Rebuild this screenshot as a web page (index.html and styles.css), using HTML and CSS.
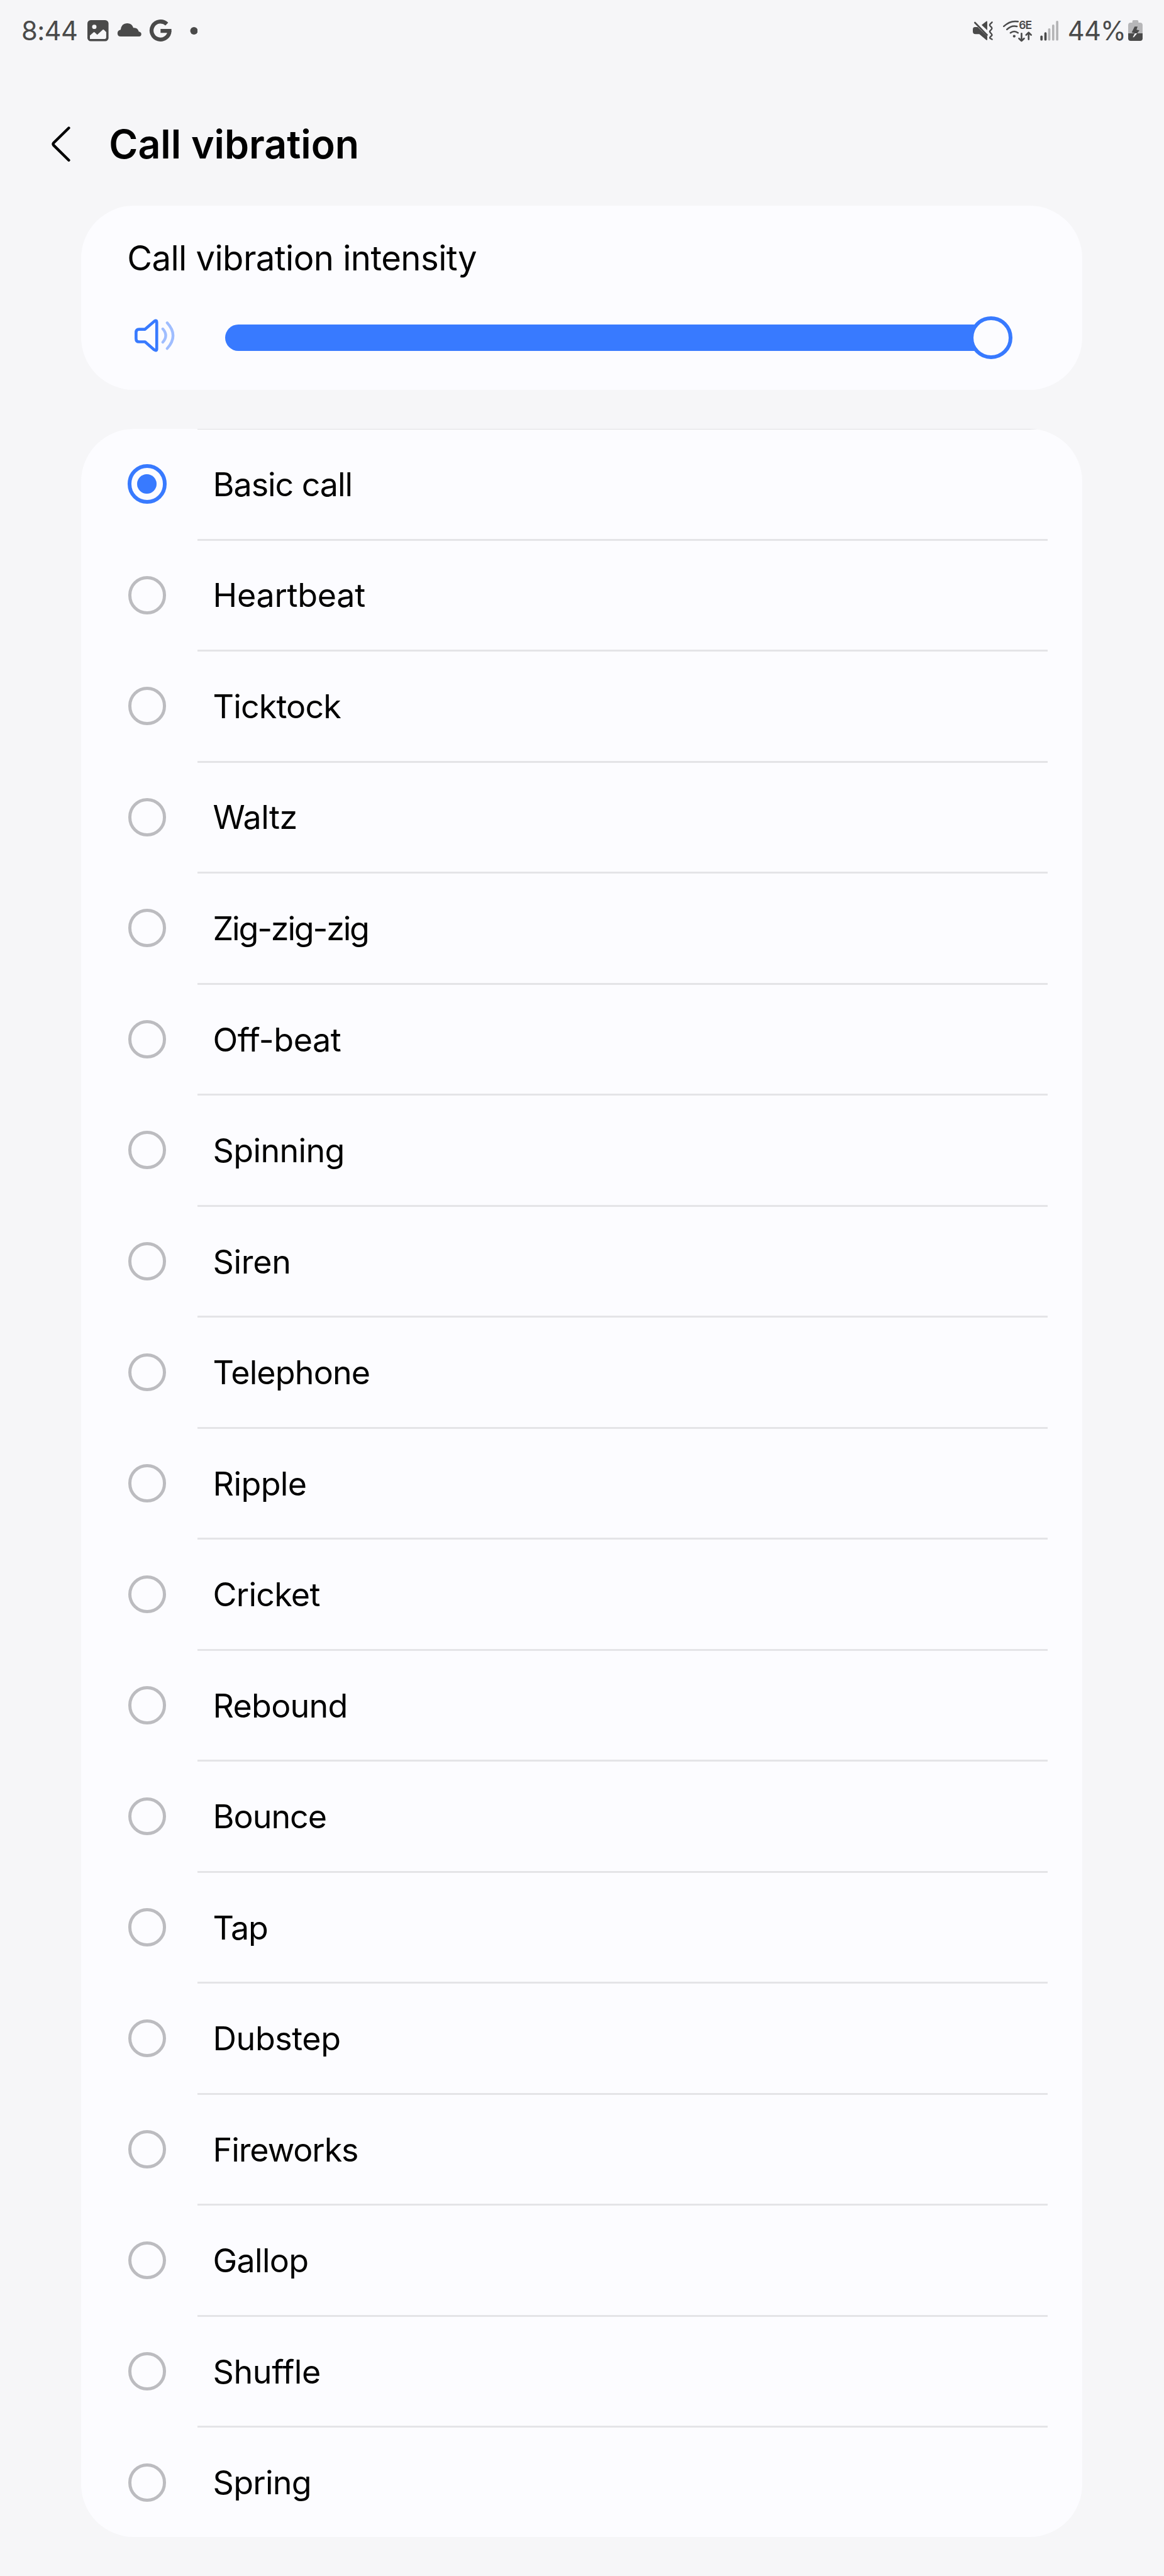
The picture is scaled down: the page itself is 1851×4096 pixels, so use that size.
FILE: index.html
```html
<!DOCTYPE html>
<html lang="en">
<head>
<meta charset="utf-8">
<title>Call vibration</title>
<link rel="stylesheet" href="styles.css">
</head>
<body>
<div class="status">
  <span class="time">8:44</span>
  <svg class="notifications" viewBox="417 87 529 120" fill="#4a4a4a">
    <rect x="417" y="96" width="101" height="101" rx="16"/>
    <circle cx="450" cy="128" r="10.5" fill="#f6f6f8"/>
    <path fill="#f6f6f8" d="M429 170L446 155Q449 152 452 155L464 166L488 144Q493 139 498 144L507 153V178Q507 186 499 186H429Z"/>
    <path d="M576 174Q561 174 561 159Q561 145 576 142Q580 111 607 111Q630 111 637 133Q657 130 663 151Q675 154 675 163Q675 174 664 174Z"/>
    <path fill="none" stroke="#4a4a4a" stroke-width="19" d="M797 115A43 43 0 1 0 810 147"/>
    <path d="M767 138H819V148L812 157H767Z"/>
    <circle cx="927" cy="147" r="18"/>
  </svg>
  <div class="system">
    <svg class="signals" viewBox="153 87 410 120" fill="#4a4a4a">
      <path d="M195 119L218 101Q222 100 222 104V144Z"/>
      <path d="M163 129H176L222 173V190Q221 194 217 191L184 163H166Q153 163 153 150V141Q153 129 163 129Z"/>
      <g fill="none" stroke="#4a4a4a" stroke-linecap="round" stroke-linejoin="round">
        <path stroke-width="8" d="M163 108L221 167"/>
        <path stroke-width="7" d="M245 106L235 116Q232 120 235 123L243 131Q246 135 243 139L236 147Q232 151 236 155L243 163Q246 167 243 170L236 177Q233 181 236 183L245 188"/>
        <path stroke-width="7.5" d="M301 126Q332 96 369 103M316 141Q338 119 364 126M333 157Q351 143 369 157"/>
        <path stroke-width="8" d="M386 160V194M374 184L386 195L398 184M420 188V156M408 167L420 155L432 167"/>
      </g>
      <circle cx="351" cy="173" r="6.5"/>
      <text class="band" x="373" y="139">6E</text>
      <rect x="476" y="170" width="11" height="24" rx="5"/>
      <rect x="495" y="154" width="11" height="40" rx="5"/>
      <g fill="#b4b4b6">
        <rect x="513" y="135" width="11" height="59" rx="5"/>
        <rect x="532" y="117" width="11" height="77" rx="5"/>
        <rect x="551" y="99" width="11" height="95" rx="5"/>
      </g>
    </svg>
    <span class="percent">44%</span>
    <svg class="battery" viewBox="897 87 69 120">
      <path fill="#b7b7b9" d="M897 160V120Q897 108 909 108H917V102Q917 96 923 96H940Q946 96 946 102V108H954Q966 108 966 120V160Z"/>
      <path fill="#4a4a4a" d="M897 159H966V184Q966 195 954 195H909Q897 195 897 184Z"/>
      <path fill="#4a4a4a" d="M928 127H942L937 142L951 145L940 159H929L914 155Z"/>
      <path fill="#f6f6f8" d="M929 159H940L924 178H919Z"/>
    </svg>
  </div>
</div>

<header class="header">
  <svg class="back" viewBox="0 0 30 56.4" fill="none" stroke="#000" stroke-width="4.4" stroke-linecap="round" stroke-linejoin="round"><path d="M27.5 2.5L3.2 26.4Q1.8 28.2 3.2 30L27.5 53.9"/></svg>
  <h1 class="title">Call vibration</h1>
</header>

<section class="card intensity">
  <h2 class="subtitle">Call vibration intensity</h2>
  <div class="slider">
    <svg class="speaker" viewBox="280 83 200 184" fill="none" stroke-linecap="round" stroke-linejoin="round">
      <path stroke="#387aff" stroke-width="14" d="M290 152Q290 136 304 136H333L377 98Q389 90 389 102V230Q389 242 377 234L333 196H304Q290 196 290 180Z"/>
      <path stroke="#9fbdff" stroke-width="13" d="M418 134Q446 166 418 198M439 105Q495 166 439 228"/>
    </svg>
    <div class="track"><div class="thumb"></div></div>
  </div>
</section>

<section class="card">
  <div class="topline"></div>
  <ul class="list">
    <li class="row"><i class="radio on"></i><span class="label">Basic call</span></li>
    <li class="row"><i class="radio"></i><span class="label">Heartbeat</span></li>
    <li class="row"><i class="radio"></i><span class="label">Ticktock</span></li>
    <li class="row"><i class="radio"></i><span class="label">Waltz</span></li>
    <li class="row"><i class="radio"></i><span class="label">Zig-zig-zig</span></li>
    <li class="row"><i class="radio"></i><span class="label">Off-beat</span></li>
    <li class="row"><i class="radio"></i><span class="label">Spinning</span></li>
    <li class="row"><i class="radio"></i><span class="label">Siren</span></li>
    <li class="row"><i class="radio"></i><span class="label">Telephone</span></li>
    <li class="row"><i class="radio"></i><span class="label">Ripple</span></li>
    <li class="row"><i class="radio"></i><span class="label">Cricket</span></li>
    <li class="row"><i class="radio"></i><span class="label">Rebound</span></li>
    <li class="row"><i class="radio"></i><span class="label">Bounce</span></li>
    <li class="row"><i class="radio"></i><span class="label">Tap</span></li>
    <li class="row"><i class="radio"></i><span class="label">Dubstep</span></li>
    <li class="row"><i class="radio"></i><span class="label">Fireworks</span></li>
    <li class="row"><i class="radio"></i><span class="label">Gallop</span></li>
    <li class="row"><i class="radio"></i><span class="label">Shuffle</span></li>
    <li class="row"><i class="radio"></i><span class="label">Spring</span></li>
  </ul>
</section>
</body>
</html>
```
FILE: styles.css
```css
* { box-sizing: border-box; }

body {
  margin: 0;
  min-height: 4096px;
  background: #f6f6f8;
  color: #000;
  font-family: Inter, "Liberation Sans", sans-serif;
  overflow: hidden;
}

svg { display: block; flex: none; }

/* Status bar */
.status {
  display: flex;
  align-items: center;
  height: 97.8px;
  padding: 0 34.2px 0 34px;
  color: #4a4a4a;
  font-size: 41.7px;
  font-weight: 380;
  line-height: 50px;
}
.time { width: 104.7px; letter-spacing: -0.6px; }
.notifications { width: 175.8px; height: 39.9px; }
.system { display: flex; align-items: center; margin-left: auto; }
.signals { width: 136.3px; height: 39.9px; margin-right: 14.8px; }
.band { font-size: 53px; font-weight: 600; letter-spacing: -3px; }
.percent { width: 96px; letter-spacing: -0.8px; }
.battery { width: 23px; height: 39.9px; }

/* Page header */
.header {
  display: flex;
  align-items: center;
  height: 197px;
  margin-top: 32.3px;
  padding-left: 81.8px;
}
.back { width: 29.9px; height: 56.2px; }
.title {
  margin: 0 0 0 61.6px;
  font-size: 62.6px;
  font-weight: 600;
  letter-spacing: 0;
}

/* Cards */
.card {
  width: 1592.8px;
  margin-left: 128.6px;
  border-radius: 84px;
  background: #fcfcff;
  overflow: hidden;
}

.intensity { height: 293.2px; margin-bottom: 61.9px; padding: 52.8px 0 0 73.6px; }
.subtitle {
  margin: 0 0 37.1px;
  font-size: 54.5px;
  font-weight: 400;
  line-height: 60px;
  letter-spacing: -0.58px;
}
.slider { display: flex; align-items: center; height: 120px; padding-left: 10.7px; }
.speaker { width: 66.5px; height: 61.1px; margin-right: 78.7px; }
.track {
  position: relative;
  width: 1217.8px;
  height: 42.6px;
  border-radius: 21.3px 0 0 21.3px;
  background: #387aff;
}
.thumb {
  position: absolute;
  top: -12.9px;
  right: -34.2px;
  width: 68.4px;
  height: 68.4px;
  border: 6.2px solid #387aff;
  border-radius: 50%;
  background: #fcfcff;
}

/* Vibration patterns */
.topline { height: 1px; margin: 0 55px 0 185.5px; background: #e0e0e2; }
.list { margin: 0; padding: 0; list-style: none; }
.row {
  display: flex;
  align-items: center;
  height: 176.52px;
  padding: 0 55px 0 74.4px;
}
.radio {
  display: flex;
  flex: none;
  width: 60.7px;
  height: 60.7px;
  margin: 0 49.8px 3.4px 0.6px;
  border: 5px solid #bcbcc0;
  border-radius: 50%;
}
.radio.on {
  width: 62.2px;
  height: 62.2px;
  margin: 0 49px 3.8px -0.1px;
  border: 6px solid #387aff;
}
.radio.on::before {
  content: "";
  width: 31px;
  height: 31px;
  margin: auto;
  border-radius: 50%;
  background: #387aff;
}
.label {
  display: flex;
  align-items: center;
  flex: 1;
  height: 100%;
  padding: 1px 0 0 24.5px;
  border-bottom: 3px solid #e4e4e7;
  font-size: 52px;
  letter-spacing: -0.75px;
}
.row:last-child { height: 173.5px; }
.row:last-child .label { border-bottom: 0; }
.row:last-child .radio { margin-bottom: 0; }

/* Per-name tracking */
.row:nth-child(1) .label { letter-spacing: -1.08px; }
.row:nth-child(2) .label { letter-spacing: -0.28px; }
.row:nth-child(3) .label { letter-spacing: -0.87px; }
.row:nth-child(4) .label { letter-spacing: -0.55px; }
.row:nth-child(5) .label { letter-spacing: -2.2px; }
.row:nth-child(6) .label { letter-spacing: -0.48px; }
.row:nth-child(7) .label { letter-spacing: -0.66px; }
.row:nth-child(8) .label { letter-spacing: -0.35px; }
.row:nth-child(9) .label { letter-spacing: -0.87px; }
.row:nth-child(10) .label { letter-spacing: -0.61px; }
.row:nth-child(13) .label { letter-spacing: -1.03px; }
.row:nth-child(14) .label { letter-spacing: -1.2px; }
.row:nth-child(15) .label { letter-spacing: -0.47px; }
.row:nth-child(16) .label { letter-spacing: -1.07px; }
.row:nth-child(18) .label { letter-spacing: -0.43px; }
```
